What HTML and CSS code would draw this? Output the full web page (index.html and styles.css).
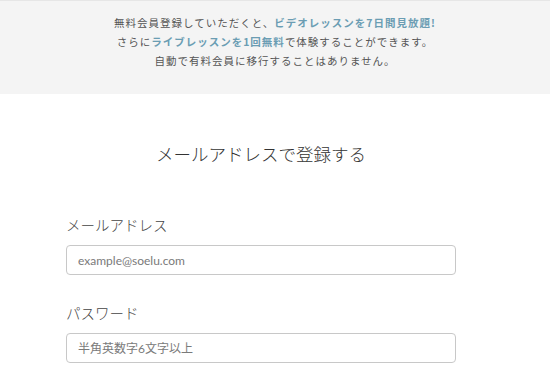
FILE: index.html
```html
<!DOCTYPE html>
<html lang="ja">
<head>
<meta charset="utf-8">
<link rel="stylesheet" href="styles.css">
</head>
<body>
<div class="notice">
  <p>無料会員登録していただくと、<strong>ビデオレッスンを7日間見放題!</strong></p>
  <p>さらに<strong>ライブレッスンを1回無料</strong>で体験することができます。</p>
  <p>自動で有料会員に移行することはありません。</p>
</div>
<main class="form">
  <h1 class="title">メールアドレスで登録する</h1>
  <div class="field">
    <label class="label" for="email">メールアドレス</label>
    <input class="input" id="email" type="email" placeholder="example@soelu.com">
  </div>
  <div class="field">
    <label class="label" for="pw">パスワード</label>
    <input class="input" id="pw" type="password" placeholder="半角英数字6文字以上">
  </div>
</main>
</body>
</html>
```
FILE: styles.css
```css
html, body {
  margin: 0;
  padding: 0;
  background: #fff;
  font-family: "Lato", "Noto Sans CJK JP", sans-serif;
  color: #333;
}
.notice {
  background: #f4f4f4;
  border-top: 1px solid #e6e6e6;
  height: 94px;
  box-sizing: border-box;
  padding-top: 12px;
  text-align: center;
  font-family: "Noto Sans CJK JP", sans-serif;
  font-size: 10.5px;
  letter-spacing: 1px;
  line-height: 19px;
  color: #555;
}
.notice p {
  margin: 0;
}
.notice strong {
  color: #6b9db3;
  font-weight: 700;
}
.form {
  padding: 0 94px 0 66px;
}
.title {
  margin: 40px 0 0;
  text-align: center;
  font-family: "Noto Sans CJK JP", sans-serif;
  font-weight: 300;
  font-size: 17.5px;
  line-height: 40px;
  color: #333;
}
.field {
  display: flex;
  flex-direction: column;
}
.field + .field {
  margin-top: 28px;
}
.label {
  margin-top: 41px;
  font-family: "Noto Sans CJK JP", sans-serif;
  font-weight: 300;
  font-size: 14.5px;
  line-height: 20px;
  color: #444;
  margin-bottom: 10px;
}
.field + .field .label {
  margin-top: 0;
}
.input {
  box-sizing: border-box;
  width: 390px;
  height: 30px;
  border: 1px solid #c8c8c8;
  border-radius: 4px;
  padding: 0 11px;
  font-family: "Lato", "Noto Sans CJK JP", sans-serif;
  font-size: 12px;
  color: #333;
  background: #fff;
  outline: none;
}
.input::placeholder {
  color: #7a7a7a;
}
```
